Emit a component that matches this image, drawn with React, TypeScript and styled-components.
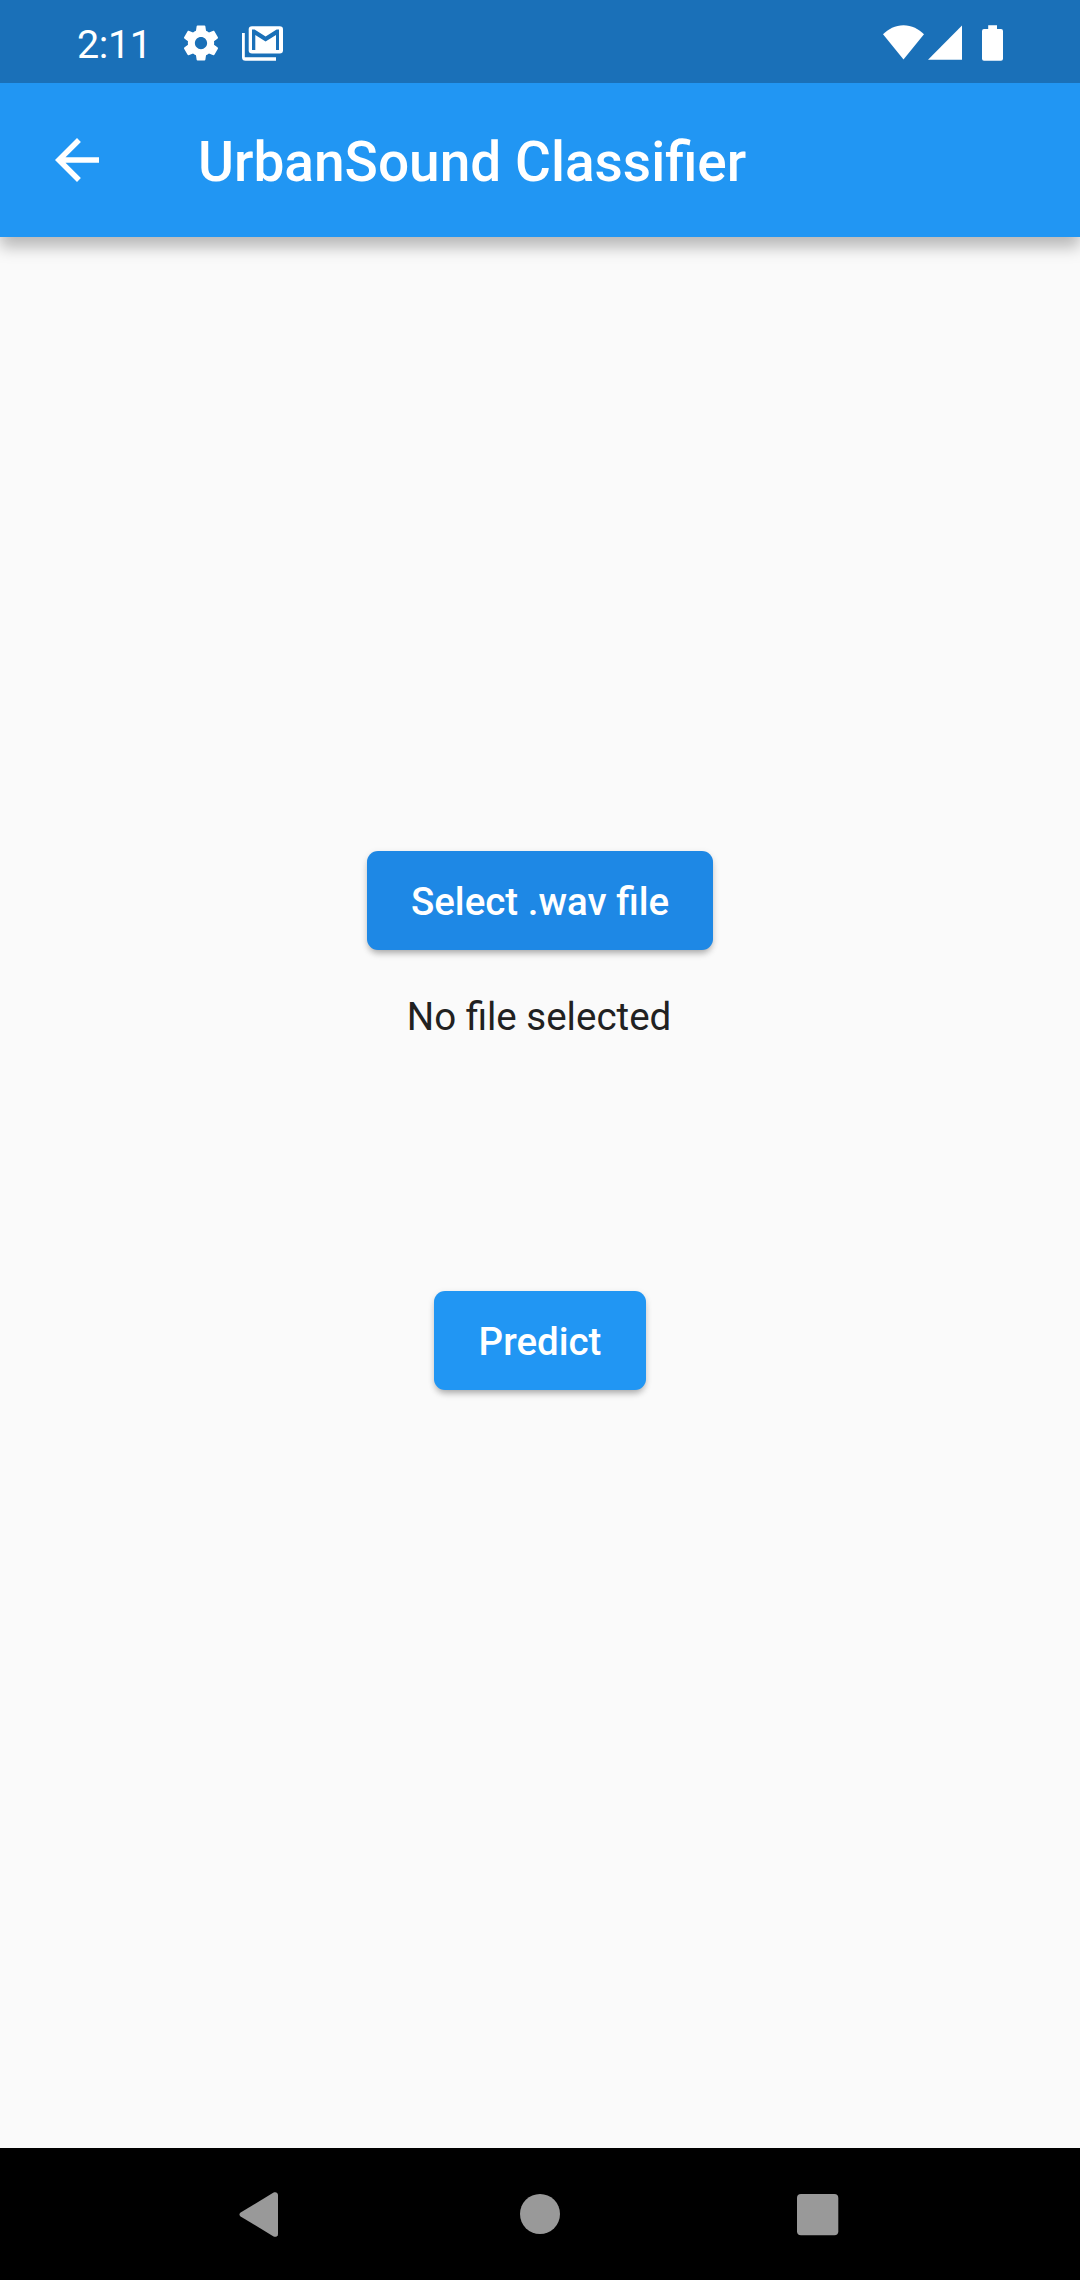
import React from "react";
import styled, { createGlobalStyle } from "styled-components";

const GlobalStyle = createGlobalStyle`
  html, body { margin: 0; padding: 0; }
  body {
    font-family: Roboto, "Noto Sans", sans-serif;
    background: #fafafa;
  }
`;

const Screen = styled.div`
  width: 1080px;
  height: 2280px;
  display: flex;
  flex-direction: column;
  overflow: hidden;
  background: #fafafa;
`;

const StatusBar = styled.div`
  box-sizing: border-box;
  height: 83px;
  padding: 0 76px 0 77px;
  display: flex;
  justify-content: space-between;
  align-items: flex-start;
  background: #1a70b8;
  color: #fff;
`;

const StatusGroup = styled.div`
  display: flex;
  align-items: flex-start;
`;

const Clock = styled.span`
  width: 103px;
  padding-top: 21px;
  font-size: 39.5px;
  line-height: 47px;
  letter-spacing: -0.4px;
  white-space: nowrap;
`;

const Glyph = styled.svg<{ $top?: number; $left?: number }>`
  display: block;
  flex: none;
  margin-top: ${(p) => p.$top ?? 0}px;
  margin-left: ${(p) => p.$left ?? 0}px;
`;

const AppBar = styled.header`
  box-sizing: border-box;
  height: 154px;
  padding-left: 44px;
  display: flex;
  align-items: center;
  background: #2196f3;
  color: #fff;
  box-shadow: 0 10px 15px rgba(0, 0, 0, 0.27);
  clip-path: inset(0 0 -40px 0);
`;

const BackButton = styled.button`
  width: 66px;
  height: 66px;
  padding: 0;
  border: 0;
  background: none;
  color: inherit;
`;

const Title = styled.h1`
  margin: 0 0 0 88px;
  padding-top: 3px;
  font-size: 55px;
  line-height: 64px;
  font-weight: 500;
  font-feature-settings: "liga" 1;
  white-space: nowrap;
`;

const Content = styled.main`
  flex: 1;
  box-sizing: border-box;
  padding-top: 614px;
  display: flex;
  flex-direction: column;
  align-items: center;
`;

const RaisedButton = styled.button<{ $width: number; $pressed?: boolean }>`
  box-sizing: border-box;
  width: ${(p) => p.$width}px;
  height: 99px;
  padding: 2px 0 0;
  border: 0;
  border-radius: 11px;
  background: ${(p) => (p.$pressed ? "#1e88e5" : "#2196f3")};
  color: #fff;
  font-family: inherit;
  font-size: 38.5px;
  line-height: 45px;
  font-weight: 500;
  font-feature-settings: "liga" 1;
  white-space: nowrap;
  box-shadow:
    0 5px 7px -2px rgba(0, 0, 0, 0.27),
    0 2px 7px 0 rgba(0, 0, 0, 0.1);
`;

const FileLabel = styled.p`
  margin: 44px 0 251px;
  padding-right: 2px;
  height: 46px;
  font-size: 38.5px;
  line-height: 46px;
  font-feature-settings: "liga" 1;
  color: #212121;
`;

const NavBar = styled.nav`
  box-sizing: border-box;
  height: 132px;
  padding: 44px 241px 0 239px;
  display: flex;
  justify-content: space-between;
  align-items: flex-start;
  background: #000;
`;

export default function App() {
  return (
    <>
      <GlobalStyle />
      <Screen>
        <StatusBar>
          <StatusGroup>
            <Clock>2:11</Clock>
            <Glyph $top={22} width="42" height="42" viewBox="0 0 24 24" fill="#fff">
              <path d="M19.43 12.98c.04-.32.07-.64.07-.98s-.03-.66-.07-.98l2.11-1.65c.19-.15.24-.42.12-.64l-2-3.46c-.12-.22-.39-.3-.61-.22l-2.49 1c-.52-.4-1.08-.73-1.69-.98l-.38-2.65C14.46 2.18 14.25 2 14 2h-4c-.25 0-.46.18-.49.42l-.38 2.65c-.61.25-1.17.59-1.69.98l-2.49-1c-.23-.09-.49 0-.61.22l-2 3.46c-.13.22-.07.49.12.64l2.11 1.65c-.04.32-.07.65-.07.98s.03.66.07.98l-2.11 1.65c-.19.15-.24.42-.12.64l2 3.46c.12.22.39.3.61.22l2.49-1c.52.4 1.08.73 1.69.98l.38 2.65c.03.24.24.42.49.42h4c.25 0 .46-.18.49-.42l.38-2.65c.61-.25 1.17-.59 1.69-.98l2.49 1c.23.09.49 0 .61-.22l2-3.46c.12-.22.07-.49-.12-.64l-2.11-1.65zM12 15.5c-1.93 0-3.5-1.57-3.5-3.5s1.57-3.5 3.5-3.5 3.5 1.57 3.5 3.5-1.57 3.5-3.5 3.5z" />
            </Glyph>
            <Glyph $top={26} $left={20} width="41" height="35" viewBox="0 0 41 35" fill="#fff">
              <path d="M0 7h2.8v24.2H34v3.5H3.5A3.5 3.5 0 0 1 0 31.2z" />
              <rect x="6.7" y="0.2" width="34.3" height="27.4" rx="3.3" />
              <path
                d="M10 24V3.6h2.6l11 7 11-7H37V24h-3V9l-10.4 6.4L13.3 9v15z"
                fill="#1a70b8"
              />
            </Glyph>
          </StatusGroup>
          <StatusGroup>
            <Glyph $top={25} width="41" height="35" viewBox="0 0 41 35" fill="#fff">
              <path d="M0 9.3C5 4.2 12.5.3 20.5.3S36 4.2 41 9.3L20.5 34.5z" />
            </Glyph>
            <Glyph $top={25} $left={4} width="34" height="35" viewBox="0 0 34 35" fill="#fff">
              <path d="M34 .5v34.2H0z" />
            </Glyph>
            <Glyph $top={25} $left={20} width="22" height="36" viewBox="0 0 22 36" fill="#fff">
              <path d="M6.2.3H15V4h4a2 2 0 0 1 2 2v27.7a2 2 0 0 1-2 2H2a2 2 0 0 1-2-2V6a2 2 0 0 1 2-2h4.2z" />
            </Glyph>
          </StatusGroup>
        </StatusBar>
        <AppBar>
          <BackButton aria-label="Back">
            <Glyph width="66" height="66" viewBox="0 0 24 24" fill="#fff">
              <path d="M20 11H7.83l5.59-5.59L12 4l-8 8 8 8 1.41-1.41L7.83 13H20v-2z" />
            </Glyph>
          </BackButton>
          <Title>UrbanSound Classifier</Title>
        </AppBar>
        <Content>
          <RaisedButton $width={346} $pressed>
            Select .wav file
          </RaisedButton>
          <FileLabel>No file selected</FileLabel>
          <RaisedButton $width={212}>Predict</RaisedButton>
        </Content>
        <NavBar>
          <Glyph width="40" height="45" viewBox="0 0 40 45" fill="#999">
            <path d="M1.6 20.6 34.6.6C36.6-.6 39 .7 39 3v39c0 2.3-2.4 3.6-4.4 2.4L1.6 24.5a2.3 2.3 0 0 1 0-3.9z" />
          </Glyph>
          <Glyph $top={2} $left={4} width="40" height="40" viewBox="0 0 40 40" fill="#999">
            <circle cx="20" cy="20" r="20" />
          </Glyph>
          <Glyph $top={2} width="42" height="42" viewBox="0 0 42 42" fill="#999">
            <rect width="41.3" height="41.3" rx="4" />
          </Glyph>
        </NavBar>
      </Screen>
    </>
  );
}
